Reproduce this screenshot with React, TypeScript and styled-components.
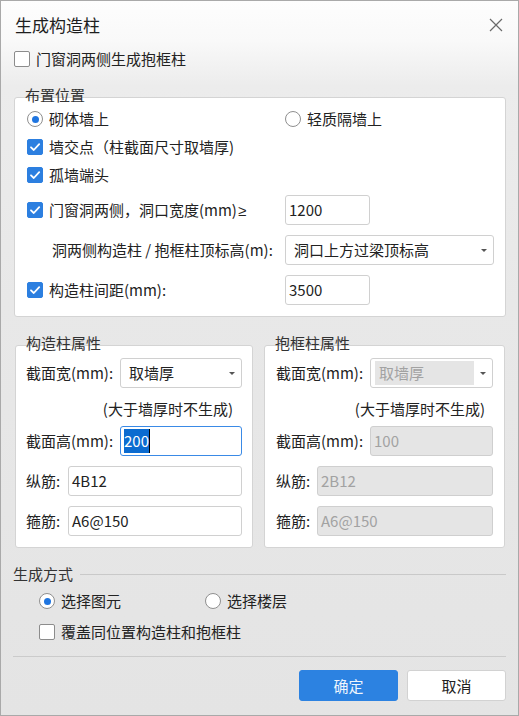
import React from 'react';
import styled, { createGlobalStyle } from 'styled-components';

const GlobalStyle = createGlobalStyle`
  html, body { margin: 0; padding: 0; background: #fff; }
  body { font-family: "Noto Sans CJK SC", "Noto Sans", sans-serif; }
  * { box-sizing: border-box; }
`;

const Window = styled.div`
  width: 519px;
  height: 716px;
  border: 1px solid #a9a9a9;
  background: linear-gradient(to bottom, #fdfdfd 0px, #f9f9f9 40px, #ececec 85px, #e8e8e8 300px, #e4e4e4 716px);
  color: #222;
  font-size: 15px;
  line-height: 20px;
  display: flex;
  flex-direction: column;
  overflow: hidden;
`;

const TitleBar = styled.div`
  height: 48px;
  display: flex;
  align-items: center;
  justify-content: space-between;
  padding: 0 15px 0 14px;
  font-size: 17px;
  color: #1e1e1e;
`;

const Body = styled.div`
  padding: 0 12px 0 12px;
  display: flex;
  flex-direction: column;
`;

const Line = styled.label<{ $indent?: number }>`
  display: flex;
  align-items: center;
  gap: 6px;
  height: 20px;
  padding-left: ${p => p.$indent ?? 0}px;
  white-space: nowrap;
`;

const Box = styled.span<{ $checked?: boolean }>`
  width: 16px;
  height: 16px;
  flex: none;
  border-radius: 2px;
  border: 1px solid ${p => (p.$checked ? '#2c7fe0' : '#8c8c8c')};
  background: ${p => (p.$checked ? '#2c7fe0' : '#fff')};
  display: flex;
  align-items: center;
  justify-content: center;
`;

const Dot = styled.span<{ $checked?: boolean }>`
  width: 16px;
  height: 16px;
  flex: none;
  border-radius: 50%;
  border: 1px solid #8f8f8f;
  background: #fff;
  display: flex;
  align-items: center;
  justify-content: center;
  &::after {
    content: '';
    width: 7px;
    height: 7px;
    border-radius: 50%;
    background: ${p => (p.$checked ? '#1f75e0' : 'transparent')};
  }
`;

const Legend = styled.div`
  position: relative;
  z-index: 1;
  height: 20px;
  padding-left: 11px;
  color: #333;
  margin-top: 16px;
`;

const Panel = styled.div<{ $pad: string }>`
  margin-top: -8px;
  background: #fff;
  border: 1px solid #d4d4d4;
  border-radius: 3px;
  padding: ${p => p.$pad};
  display: flex;
  flex-direction: column;
`;

const Group = styled.div`
  margin-left: 1px;
  display: flex;
  flex-direction: column;
`;

const GridRow = styled.div<{ $h: number; $mt?: number }>`
  display: grid;
  grid-template-columns: 258px 1fr;
  align-items: center;
  height: ${p => p.$h}px;
  margin-top: ${p => p.$mt ?? 0}px;
`;

const Twin = styled.div`
  display: grid;
  grid-template-columns: 239px 242px;
  gap: 10px;
  margin-left: 1px;
`;

const PropRow = styled.div<{ $label: number; $mt?: number }>`
  display: grid;
  grid-template-columns: ${p => p.$label}px 1fr;
  align-items: center;
  height: 30px;
  margin-top: ${p => p.$mt ?? 0}px;
  white-space: nowrap;
`;

const Note = styled.div<{ $right: number }>`
  height: 38px;
  padding: 4px ${p => p.$right}px 0 0;
  display: flex;
  align-items: center;
  justify-content: flex-end;
  white-space: nowrap;
`;

const Field = styled.div<{ $w?: number; $disabled?: boolean; $focus?: boolean; $select?: boolean }>`
  height: 30px;
  width: ${p => (p.$w ? `${p.$w}px` : '100%')};
  border: 1px solid ${p => (p.$focus ? '#3a8ae6' : p.$disabled ? '#cfcfcf' : '#d0d0d0')};
  border-radius: 3px;
  background: ${p => (p.$disabled ? '#e5e5e5' : '#fff')};
  color: ${p => (p.$disabled ? '#a2a2a2' : '#222')};
  display: flex;
  align-items: center;
  justify-content: space-between;
  padding: 0 ${p => (p.$select ? '8px' : '3px')};
  white-space: nowrap;
`;

const GreyInner = styled.span`
  flex: 1;
  align-self: stretch;
  margin: 2px 6px 2px -4px;
  padding-left: 4px;
  background: #e5e5e5;
  color: #a2a2a2;
  display: flex;
  align-items: center;
`;

const Caret = styled.span`
  width: 0;
  height: 0;
  border-left: 3px solid transparent;
  border-right: 3px solid transparent;
  border-top: 3px solid #555;
  flex: none;
  margin-right: -2px;
`;

const Selected = styled.span`
  background: #0b6bd0;
  color: #fff;
  line-height: 24px;
  border-right: 1px solid #000;
`;

const Latin = styled.span`
  font-family: "Liberation Sans", sans-serif;
  margin-left: 1px;
`;

const Heading = styled.div`
  margin-top: 16px;
  height: 20px;
  display: flex;
  align-items: center;
  gap: 7px;
  color: #333;
  &::after {
    content: '';
    flex: 1;
    height: 1px;
    background: #c9c9c9;
  }
`;

const ChoiceRow = styled.div<{ $mt: number }>`
  display: grid;
  grid-template-columns: 166px 1fr;
  padding-left: 26px;
  margin-top: ${p => p.$mt}px;
`;

const Rule = styled.div`
  height: 1px;
  background: #cbcbcb;
  margin-top: 14px;
`;

const Buttons = styled.div`
  display: flex;
  justify-content: flex-end;
  gap: 9px;
  margin-top: 13px;
`;

const Button = styled.div<{ $primary?: boolean }>`
  width: 99px;
  height: 31px;
  border-radius: 3px;
  display: flex;
  align-items: center;
  justify-content: center;
  background: ${p => (p.$primary ? '#2c82e1' : '#fff')};
  color: ${p => (p.$primary ? '#eef5fd' : '#222')};
  border: 1px solid ${p => (p.$primary ? '#2c82e1' : '#d2d2d2')};
`;

const Tick = () => (
  <svg width="12" height="12" viewBox="0 0 12 12">
    <path d="M2 6.3 L4.8 9 L10.2 3.2" fill="none" stroke="#fff" strokeWidth="1.8" strokeLinecap="round" strokeLinejoin="round" />
  </svg>
);

const Check: React.FC<{ checked?: boolean; children: React.ReactNode; indent?: number }> = ({ checked, children, indent }) => (
  <Line $indent={indent}>
    <Box $checked={checked}>{checked && <Tick />}</Box>
    <span>{children}</span>
  </Line>
);

const Radio: React.FC<{ checked?: boolean; children: React.ReactNode }> = ({ checked, children }) => (
  <Line>
    <Dot $checked={checked} />
    <span>{children}</span>
  </Line>
);

const Select: React.FC<{ value: string; disabled?: boolean }> = ({ value, disabled }) => (
  <Field $select>
    {disabled ? <GreyInner>{value}</GreyInner> : <span>{value}</span>}
    <Caret />
  </Field>
);

const CloseIcon = () => (
  <svg width="14" height="14" viewBox="0 0 14 14">
    <path d="M1 1 L13 13 M13 1 L1 13" stroke="#6a6a6a" strokeWidth="1.2" />
  </svg>
);

export default function App() {
  return (
    <>
      <GlobalStyle />
      <Window>
        <TitleBar>
          <span>生成构造柱</span>
          <CloseIcon />
        </TitleBar>
        <Body>
          <Check indent={1}>门窗洞两侧生成抱框柱</Check>

          <Group>
            <Legend>布置位置</Legend>
            <Panel $pad="7px 11px 11px 12px">
              <GridRow $h={28}>
                <Radio checked>砌体墙上</Radio>
                <Radio>轻质隔墙上</Radio>
              </GridRow>
              <GridRow $h={28}>
                <Check checked>墙交点（柱截面尺寸取墙厚)</Check>
              </GridRow>
              <GridRow $h={28}>
                <Check checked>孤墙端头</Check>
              </GridRow>
              <GridRow $h={30} $mt={6}>
                <Check checked>
                  门窗洞两侧，洞口宽度(mm)<Latin>≥</Latin>
                </Check>
                <Field $w={85}>1200</Field>
              </GridRow>
              <GridRow $h={30} $mt={10}>
                <Line $indent={25}>洞两侧构造柱 / 抱框柱顶标高(m):</Line>
                <Select value="洞口上方过梁顶标高" />
              </GridRow>
              <GridRow $h={30} $mt={10}>
                <Check checked>构造柱间距(mm):</Check>
                <Field $w={85}>3500</Field>
              </GridRow>
            </Panel>
          </Group>

          <Twin>
            <Group>
              <Legend>构造柱属性</Legend>
              <Panel $pad="12px 10px 11px 10px">
                <PropRow $label={94}>
                  <span>截面宽(mm):</span>
                  <Select value="取墙厚" />
                </PropRow>
                <Note $right={9}>(大于墙厚时不生成)</Note>
                <PropRow $label={94}>
                  <span>截面高(mm):</span>
                  <Field $focus>
                    <Selected>200</Selected>
                  </Field>
                </PropRow>
                <PropRow $label={42} $mt={10}>
                  <span>纵筋:</span>
                  <Field>4B12</Field>
                </PropRow>
                <PropRow $label={42} $mt={10}>
                  <span>箍筋:</span>
                  <Field>A6@150</Field>
                </PropRow>
              </Panel>
            </Group>
            <Group>
              <Legend>抱框柱属性</Legend>
              <Panel $pad="12px 11px 11px 11px">
                <PropRow $label={94}>
                  <span>截面宽(mm):</span>
                  <Select value="取墙厚" disabled />
                </PropRow>
                <Note $right={8}>(大于墙厚时不生成)</Note>
                <PropRow $label={94}>
                  <span>截面高(mm):</span>
                  <Field $disabled>100</Field>
                </PropRow>
                <PropRow $label={41} $mt={10}>
                  <span>纵筋:</span>
                  <Field $disabled>2B12</Field>
                </PropRow>
                <PropRow $label={41} $mt={10}>
                  <span>箍筋:</span>
                  <Field $disabled>A6@150</Field>
                </PropRow>
              </Panel>
            </Group>
          </Twin>

          <Heading>生成方式</Heading>
          <ChoiceRow $mt={7}>
            <Radio checked>选择图元</Radio>
            <Radio>选择楼层</Radio>
          </ChoiceRow>
          <ChoiceRow $mt={11}>
            <Check>覆盖同位置构造柱和抱框柱</Check>
          </ChoiceRow>
          <Rule />
          <Buttons>
            <Button $primary>确定</Button>
            <Button>取消</Button>
          </Buttons>
        </Body>
      </Window>
    </>
  );
}
